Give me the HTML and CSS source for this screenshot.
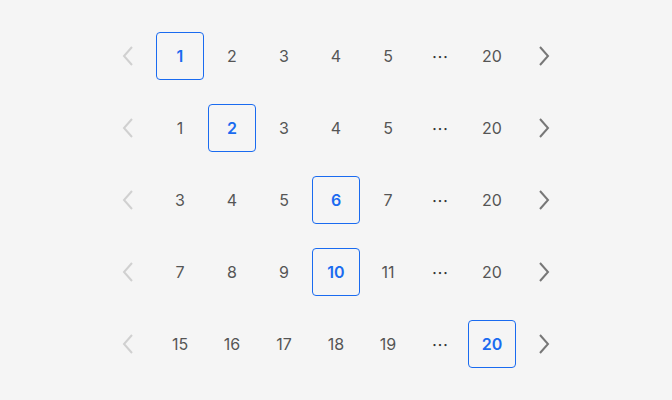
FILE: index.html
```html
<!DOCTYPE html>
<html lang="en">
<head>
<meta charset="utf-8">
<title>Pagination</title>
<link rel="stylesheet" href="styles.css">
</head>
<body>
<main class="stack">
  <nav class="pager">
    <span class="item arrow disabled"><svg viewBox="0 0 12 20" width="12" height="20"><path d="M10 1 L2 10 L10 19" /></svg></span>
    <span class="item active">1</span>
    <span class="item">2</span>
    <span class="item">3</span>
    <span class="item">4</span>
    <span class="item">5</span>
    <span class="item dots">&middot;&middot;&middot;</span>
    <span class="item">20</span>
    <span class="item arrow"><svg viewBox="0 0 12 20" width="12" height="20"><path d="M2 1 L10 10 L2 19" /></svg></span>
  </nav>
  <nav class="pager">
    <span class="item arrow disabled"><svg viewBox="0 0 12 20" width="12" height="20"><path d="M10 1 L2 10 L10 19" /></svg></span>
    <span class="item">1</span>
    <span class="item active">2</span>
    <span class="item">3</span>
    <span class="item">4</span>
    <span class="item">5</span>
    <span class="item dots">&middot;&middot;&middot;</span>
    <span class="item">20</span>
    <span class="item arrow"><svg viewBox="0 0 12 20" width="12" height="20"><path d="M2 1 L10 10 L2 19" /></svg></span>
  </nav>
  <nav class="pager">
    <span class="item arrow disabled"><svg viewBox="0 0 12 20" width="12" height="20"><path d="M10 1 L2 10 L10 19" /></svg></span>
    <span class="item">3</span>
    <span class="item">4</span>
    <span class="item">5</span>
    <span class="item active">6</span>
    <span class="item">7</span>
    <span class="item dots">&middot;&middot;&middot;</span>
    <span class="item">20</span>
    <span class="item arrow"><svg viewBox="0 0 12 20" width="12" height="20"><path d="M2 1 L10 10 L2 19" /></svg></span>
  </nav>
  <nav class="pager">
    <span class="item arrow disabled"><svg viewBox="0 0 12 20" width="12" height="20"><path d="M10 1 L2 10 L10 19" /></svg></span>
    <span class="item">7</span>
    <span class="item">8</span>
    <span class="item">9</span>
    <span class="item active">10</span>
    <span class="item">11</span>
    <span class="item dots">&middot;&middot;&middot;</span>
    <span class="item">20</span>
    <span class="item arrow"><svg viewBox="0 0 12 20" width="12" height="20"><path d="M2 1 L10 10 L2 19" /></svg></span>
  </nav>
  <nav class="pager">
    <span class="item arrow disabled"><svg viewBox="0 0 12 20" width="12" height="20"><path d="M10 1 L2 10 L10 19" /></svg></span>
    <span class="item">15</span>
    <span class="item">16</span>
    <span class="item">17</span>
    <span class="item">18</span>
    <span class="item">19</span>
    <span class="item dots">&middot;&middot;&middot;</span>
    <span class="item active">20</span>
    <span class="item arrow"><svg viewBox="0 0 12 20" width="12" height="20"><path d="M2 1 L10 10 L2 19" /></svg></span>
  </nav>
</main>
</body>
</html>
```
FILE: styles.css
```css
html, body {
  margin: 0;
  padding: 0;
  background: #f5f5f5;
}

body {
  font-family: Inter, "Noto Sans", sans-serif;
  font-size: 16px;
  color: #555;
}

.stack {
  display: flex;
  flex-direction: column;
  align-items: center;
  gap: 24px;
  padding-top: 32px;
}

.pager {
  display: flex;
  gap: 4px;
}

.item {
  box-sizing: border-box;
  width: 48px;
  height: 48px;
  display: flex;
  align-items: center;
  justify-content: center;
  border: 1px solid transparent;
  border-radius: 4px;
}

.item.active {
  border-color: #1a6bf0;
  color: #1a6bf0;
  font-weight: 600;
}

/* ellipsis between page ranges */
.item.dots {
  color: #333;
  font-size: 14px;
  font-weight: 600;
  letter-spacing: 1px;
  padding-left: 1px;
}

.arrow svg path {
  fill: none;
  stroke: #777;
  stroke-width: 2;
}

.arrow.disabled svg path {
  stroke: #d0d0d0;
}
```
